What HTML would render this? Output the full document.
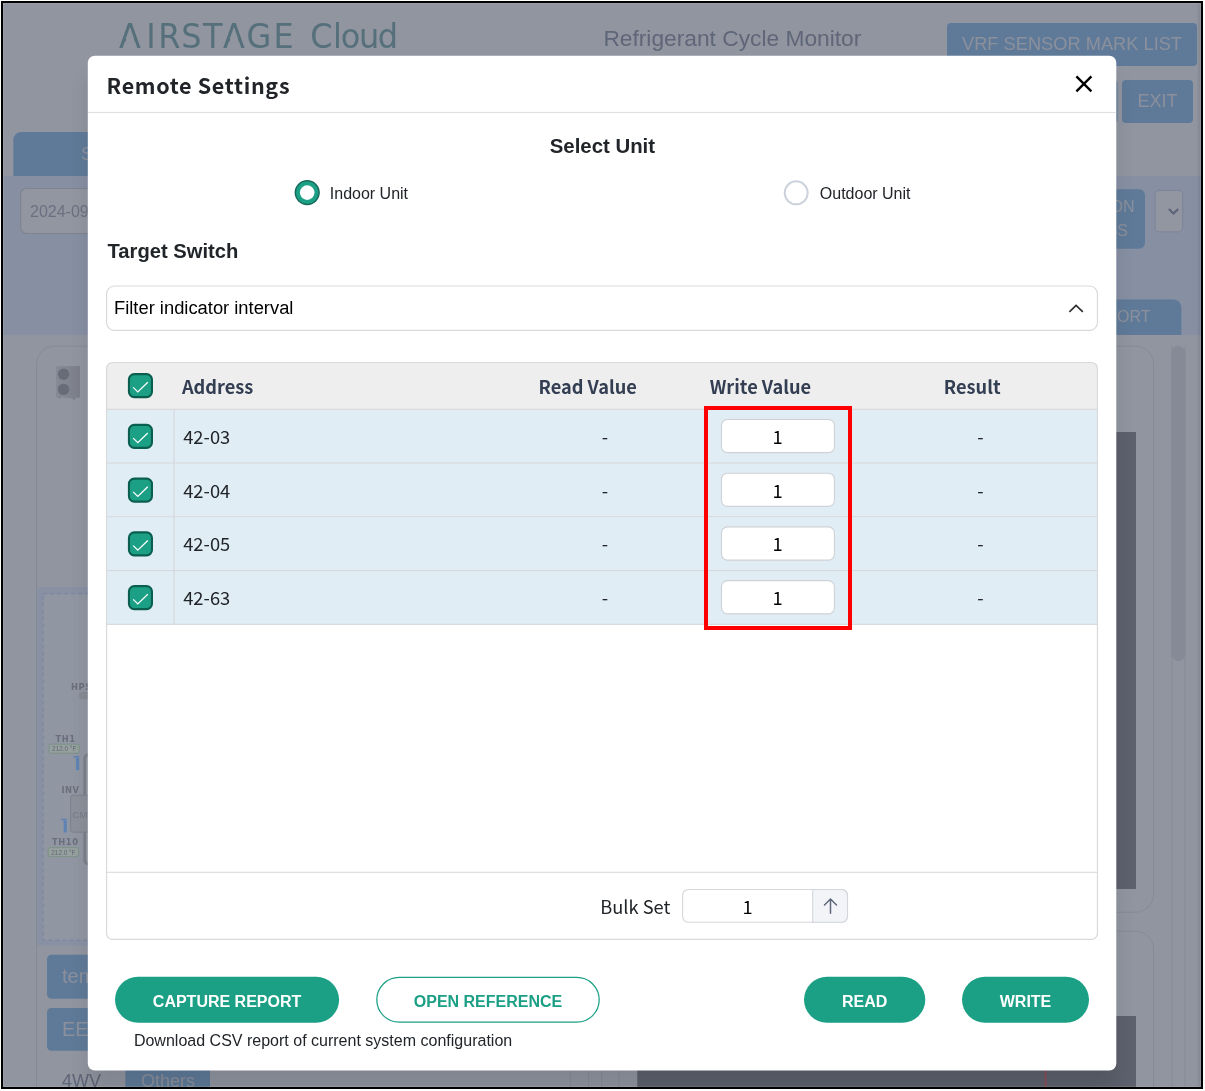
<!DOCTYPE html>
<html lang="en">
<head>
<meta charset="utf-8">
<title>Remote Settings</title>
<style>
*{box-sizing:border-box;margin:0;padding:0}
html,body{width:1205px;height:1091px;background:#fff;overflow:hidden}
body{font-family:"Liberation Sans",sans-serif;position:relative}
.abs,.stage *{position:absolute}
#frame{position:absolute;left:1px;top:1px;width:1202px;height:1088px;background:#000}
#clip{position:absolute;left:3px;top:3px;width:1198px;height:1084px;overflow:hidden;background:#9195a0}
.stage{position:absolute;left:-3px;top:-3px;width:1205px;height:1091px;will-change:transform}
.t{white-space:nowrap;line-height:1;display:block}
#clip:after{content:"";position:absolute;left:0;top:0;right:0;bottom:0;box-shadow:inset 0 0 0 1px rgba(255,255,255,.1);pointer-events:none}
svg{display:block;overflow:visible}
</style>
</head>
<body>
<div id="frame"></div>
<div id="clip">
<div class="stage" id="bg">
<svg class="abs" style="left:0;top:0" width="1205" height="1091" viewBox="0 0 1205 1091" font-family="'Liberation Sans',sans-serif">
<rect x="0" y="0" width="1205" height="1091" fill="#9195a0"/>
<!-- header -->
<g transform="translate(0 48.4) scale(1 1.055)">
<g font-family="'DejaVu Sans','Liberation Sans',sans-serif" font-size="32" fill="#56707b">
<text x="119.1 146.2 158.2 181.3 202.9 223.1 246.6 273.6" y="0">AIRSTAGE</text>
<text x="310.2 332.9 340.7 358.9 377.8" y="0">Cloud</text>
</g>
<path d="M126.7-9.700h6.800l1.500 3.900h-9.800zM230.700-9.700h6.800l1.500 3.900h-9.800z" fill="#9195a0"/>
</g>
<text x="603.4" y="46.4" font-size="22.75" fill="#5e6678">Refrigerant Cycle Monitor</text>
<rect x="947" y="23" width="250" height="43" rx="4" fill="#5f7a98"/>
<text x="1072" y="49.7" font-size="18.25" fill="#8b909c" text-anchor="middle">VRF SENSOR MARK LIST</text>
<rect x="1122" y="80" width="71" height="43" rx="4" fill="#5f7a98"/>
<text x="1157.5" y="106.9" font-size="18" fill="#8b909c" text-anchor="middle">EXIT</text>
<rect x="1000" y="80" width="117.5" height="43" rx="4" fill="#5f7a98"/>
<!-- tab + band -->
<path d="M13.300 176V140a8 8 0 0 1 8-8H200V176Z" fill="#5f7a98"/>
<text x="81" y="159.8" font-size="18" fill="#8b909c">SYSTEM</text>
<rect x="3" y="176" width="1199" height="159" fill="#878fa3"/>
<rect x="20.600" y="188.500" width="200" height="45" rx="6" fill="#9296a1" stroke="#7f8490" stroke-width="1.2"/>
<text x="30" y="217.2" font-size="16" fill="#6b7080">2024-09-10</text>
<rect x="1000" y="189.3" width="145" height="59.5" rx="6" fill="#5f7a98"/>
<text x="1134.6" y="212.2" font-size="16" fill="#8b909c" text-anchor="end">OPERATION</text>
<text x="1128" y="235.6" font-size="16" fill="#8b909c" text-anchor="end">ADDRESS</text>
<rect x="1155" y="190.300" width="27.700" height="41.600" rx="4.500" fill="#9296a1" stroke="#7f869b" stroke-width="1.2"/>
<path d="M1168.800 208.900l4.700 4.700 4.700-4.700" fill="none" stroke="#5d6578" stroke-width="2.1"/>
<path d="M1000 335V299.4H1173.4a8 8 0 0 1 8 8V335Z" fill="#5f7a98"/>
<text x="1150.6" y="322.3" font-size="16" fill="#8b909c" text-anchor="end">REPORT</text>
<!-- cards -->
<rect x="36.6" y="346.2" width="533.7" height="900" rx="18" fill="#9195a0" stroke="#868a96"/>
<rect x="619" y="346.2" width="534.6" height="566" rx="18" fill="#9195a0" stroke="#868a96"/>
<rect x="619" y="931.2" width="534.6" height="300" rx="18" fill="#9195a0" stroke="#868a96"/>
<rect x="588.2" y="346" width="1" height="760" fill="#888c97"/><rect x="601.2" y="346" width="1" height="760" fill="#888c97"/>
<!-- dark panels -->
<rect x="637.3" y="432" width="498.7" height="457" fill="#5d616d"/>
<rect x="637.3" y="1016" width="498.7" height="100" fill="#5d616d"/>
<rect x="1044.300" y="1016" width="2.500" height="100" fill="#80505f"/>
<!-- scrollbar -->
<rect x="1171.4" y="346" width="1" height="760" fill="#888c97"/>
<rect x="1184.4" y="346" width="1" height="760" fill="#888c97"/>
<rect x="1171.4" y="346" width="14" height="315" rx="7" fill="#858a96"/>
<linearGradient id="rs" x1="0" x2="1" y1="0" y2="0"><stop offset="0" stop-color="#000" stop-opacity=".03"/><stop offset="1" stop-color="#000" stop-opacity=".1"/></linearGradient><rect x="1197.200" y="0" width="4" height="1091" fill="url(#rs)"/>
<!-- outdoor unit picture -->
<g>
<linearGradient id="ug" x1="0" x2="1" y1="0" y2="0"><stop offset="0" stop-color="#878a94"/><stop offset=".5" stop-color="#82858f"/><stop offset="1" stop-color="#7b7e89"/></linearGradient>
<path d="M56 366.200L79.900 366V397.200L73 398.600 56 396.900Z" fill="url(#ug)"/>
<circle cx="63.600" cy="374.300" r="5.700" fill="#686c79"/>
<circle cx="63.600" cy="389.400" r="5.700" fill="#686c79"/>
<rect x="58.600" y="396.900" width="1.600" height="1.300" fill="#71747e"/><rect x="73" y="398.300" width="1.800" height="1.200" fill="#71747e"/>
</g>
<!-- diagram -->
<rect x="37.1" y="587.3" width="532.7" height="358" fill="#8890a4"/>
<rect x="43" y="593.8" width="521" height="346.4" fill="#9096a2" stroke="#7a82a0" stroke-dasharray="4 3"/>
<g font-family="'DejaVu Sans','Liberation Sans',sans-serif" font-weight="700" font-size="8.3" fill="#6b6f7b" letter-spacing=".6">
<text x="71" y="689.7">HPS</text>
<text x="55.4" y="742.1">TH1</text>
<text x="61.4" y="793.4">INV</text>
<text x="52" y="845.4">TH10</text>
</g>
<rect x="79.3" y="692.6" width="20" height="6" rx="3" fill="#888c96" stroke="#80848e" stroke-width=".6"/>
<rect x="49.2" y="744.2" width="30" height="9" rx="2" fill="#96a09e" stroke="#76907f" stroke-width=".8"/>
<text x="64.2" y="751.3" font-size="6.4" fill="#5f6873" text-anchor="middle">212.0 °F</text>
<rect x="48.2" y="847.6" width="30.4" height="9" rx="2" fill="#96a09e" stroke="#76907f" stroke-width=".8"/>
<text x="63.4" y="854.7" font-size="6.4" fill="#5f6873" text-anchor="middle">212.0 °F</text>
<g fill="#5f83b4">
<rect x="76" y="758" width="3.2" height="12.2" rx=".6"/><rect x="73.6" y="756" width="5.6" height="1.6"/>
<rect x="63.6" y="820.6" width="3.2" height="12" rx=".6"/><rect x="61.2" y="818.7" width="5.6" height="1.6"/>
</g>
<path d="M100 754.6H88.700a4 4 0 0 0-4 4V795" fill="none" stroke="#7c808b" stroke-width="2.6"/>
<path d="M84.7 832V860a4 4 0 0 0 4 4H100" fill="none" stroke="#7c808b" stroke-width="2.6"/>
<rect x="70.6" y="795.2" width="40" height="37" rx="2.5" fill="#8c909a" stroke="#7d818c"/>
<text x="72.6" y="818" font-size="9.6" fill="#767a86">CM</text>
<!-- bottom-left buttons -->
<rect x="47" y="954.7" width="120" height="44" rx="4.5" fill="#5f7a98"/>
<text x="62" y="982.8" font-size="20" fill="#8b909c">temp</text>
<rect x="47" y="1008" width="120" height="42.8" rx="4.5" fill="#5f7a98"/>
<text x="62" y="1035.6" font-size="20" fill="#8b909c">EEV</text>
<text x="61.9" y="1087" font-size="18" fill="#5e6678">4WV</text>
<rect x="125.4" y="1065" width="84.6" height="40" fill="#5f7a98"/>
<text x="140.9" y="1087" font-size="18" fill="#8b909c">Others</text>
<!-- bottom strip lines -->

</svg>
</div>
<div class="stage" id="fg">
<div id="modal" style="left:88px;top:56px;width:1028px;height:1014px;border-radius:7px;box-shadow:0 20px 20px rgba(0,0,0,.105)">
<svg style="left:0;top:0" width="1029" height="1015" viewBox="0 0 1029 1015">
<rect x="-0.2" y="-0.2" width="1028.5" height="1014.7" rx="7" fill="#fff"/>
<path d="M988.4 20.4l15 15m0-15l-15 15" stroke="#000" stroke-width="2.4" fill="none"/>
<rect x="0" y="55.9" width="1028.3" height="1.1" fill="#dee0e3"/>
<circle cx="219.2" cy="136.6" r="12.6" fill="#176a59"/><circle cx="219.2" cy="136.6" r="11.1" fill="#1ba085"/><circle cx="219.2" cy="136.6" r="7.3" fill="#fff"/>
<circle cx="708.2" cy="136.8" r="11.5" fill="#fff" stroke="#cdd3dc" stroke-width="2"/>
<rect x="18.55" y="229.95" width="990.9" height="44.45" rx="8" fill="#fff" stroke="#d9d9d9" stroke-width="1.15"/>
<path d="M981.4 255.8l6.700-6.400 6.700 6.400" stroke="#2e2e2e" stroke-width="1.65" fill="none"/>
<path d="M18.55 353.85V312.5a6 6 0 0 1 6-6H1003.45a6 6 0 0 1 6 6V353.85Z" fill="#eeeeee"/>
<rect x="18.55" y="353.85" width="990.9" height="53.75" fill="#e0edf5"/>
<rect x="18.55" y="407.6" width="990.9" height="53.75" fill="#e0edf5"/>
<rect x="18.55" y="461.35" width="990.9" height="53.75" fill="#e0edf5"/>
<rect x="18.55" y="515.1" width="990.9" height="53.75" fill="#e0edf5"/>
<rect x="85.45" y="353.85" width="1.1" height="215" fill="#d4d8db"/>
<rect x="18.55" y="352.75" width="990.9" height="1.1" fill="#d8d8d8"/>
<rect x="18.55" y="406.5" width="990.9" height="1.1" fill="#d5d9dc"/>
<rect x="18.55" y="460.25" width="990.9" height="1.1" fill="#d5d9dc"/>
<rect x="18.55" y="514" width="990.9" height="1.1" fill="#d5d9dc"/>
<rect x="18.55" y="567.75" width="990.9" height="1.1" fill="#d5d9dc"/>
<rect x="18.55" y="815.75" width="990.9" height="1.1" fill="#dbdbdb"/>
<rect x="18.55" y="306.5" width="990.9" height="576.8" rx="6" fill="none" stroke="#d9d9d9" stroke-width="1.15"/>
<rect x="40.95" y="318.15" width="23" height="23" rx="5.3" fill="#1ba085" stroke="#0a5e4f" stroke-width="2.1"/><path d="M45.2 331.4l4.600 4.500 10.000-9.600" fill="none" stroke="#fff" stroke-width="1.3"/>
<rect x="40.95" y="368.88" width="23" height="23" rx="5.3" fill="#1ba085" stroke="#0a5e4f" stroke-width="2.1"/><path d="M45.2 382.13l4.600 4.500 10.000-9.600" fill="none" stroke="#fff" stroke-width="1.3"/>
<rect x="633.5" y="363.43" width="112.9" height="33.2" rx="6" fill="#fff" stroke="#cfd2d6" stroke-width="1.1"/>
<rect x="40.95" y="422.63" width="23" height="23" rx="5.3" fill="#1ba085" stroke="#0a5e4f" stroke-width="2.1"/><path d="M45.2 435.88l4.600 4.500 10.000-9.600" fill="none" stroke="#fff" stroke-width="1.3"/>
<rect x="633.5" y="417.18" width="112.9" height="33.2" rx="6" fill="#fff" stroke="#cfd2d6" stroke-width="1.1"/>
<rect x="40.95" y="476.37" width="23" height="23" rx="5.3" fill="#1ba085" stroke="#0a5e4f" stroke-width="2.1"/><path d="M45.2 489.62l4.600 4.500 10.000-9.600" fill="none" stroke="#fff" stroke-width="1.3"/>
<rect x="633.5" y="470.92" width="112.9" height="33.2" rx="6" fill="#fff" stroke="#cfd2d6" stroke-width="1.1"/>
<rect x="40.95" y="530.12" width="23" height="23" rx="5.3" fill="#1ba085" stroke="#0a5e4f" stroke-width="2.1"/><path d="M45.2 543.37l4.600 4.500 10.000-9.600" fill="none" stroke="#fff" stroke-width="1.3"/>
<rect x="633.5" y="524.67" width="112.9" height="33.2" rx="6" fill="#fff" stroke="#cfd2d6" stroke-width="1.1"/>
<rect x="618" y="352" width="144" height="220" fill="none" stroke="#ff0000" stroke-width="4"/>
<rect x="594.6" y="833.5" width="164.9" height="32.8" rx="6" fill="#fff" stroke="#d6d8db" stroke-width="1.1"/>
<path d="M724.7 833.5H753.5a6 6 0 0 1 6 6V860.3a6 6 0 0 1-6 6H724.7Z" fill="#f3f4f7" stroke="#d2d6dd" stroke-width="1.1"/>
<path d="M742.5 857.2V843.3M736.5 849l6-6 6 6" stroke="#5f687b" stroke-width="1.5" fill="none" stroke-linecap="round" stroke-linejoin="round"/>
<rect x="27" y="920.8" width="224.1" height="46" rx="23" fill="#1ba085"/>
<rect x="288.8" y="921.4" width="222.4" height="44.8" rx="22.4" fill="#fff" stroke="#1ba085" stroke-width="1.25"/>
<rect x="716" y="920.8" width="121.3" height="46" rx="23" fill="#1ba085"/>
<rect x="874" y="920.8" width="127" height="46" rx="23" fill="#1ba085"/>
</svg>
<span class="t " style="left:18.60px;top:18.18px;font-family:'Noto Sans CJK JP','Noto Sans CJK SC',sans-serif;font-size:21.5px;font-weight:700;color:#212529;letter-spacing:0.67px;">Remote Settings</span>
<span class="t " style="left:514.40px;top:80.23px;font-family:'Liberation Sans',sans-serif;font-size:20.4px;font-weight:700;color:#212529;transform:translateX(-50%);">Select Unit</span>
<span class="t " style="left:241.80px;top:129.86px;font-family:'Liberation Sans',sans-serif;font-size:16px;font-weight:400;color:#212529;">Indoor Unit</span>
<span class="t " style="left:731.80px;top:129.86px;font-family:'Liberation Sans',sans-serif;font-size:16px;font-weight:400;color:#212529;">Outdoor Unit</span>
<span class="t " style="left:19.50px;top:185.10px;font-family:'Liberation Sans',sans-serif;font-size:20.2px;font-weight:700;color:#212529;">Target Switch</span>
<span class="t " style="left:26.00px;top:242.87px;font-family:'Liberation Sans',sans-serif;font-size:18.35px;font-weight:400;color:#000;">Filter indicator interval</span>
<span class="t " style="left:93.90px;top:320.86px;font-family:'Noto Sans CJK JP','Noto Sans CJK SC',sans-serif;font-size:18.2px;font-weight:700;color:#333e53;">Address</span>
<span class="t " style="left:499.70px;top:320.86px;font-family:'Noto Sans CJK JP','Noto Sans CJK SC',sans-serif;font-size:18.2px;font-weight:700;color:#333e53;transform:translateX(-50%);">Read Value</span>
<span class="t " style="left:672.40px;top:320.86px;font-family:'Noto Sans CJK JP','Noto Sans CJK SC',sans-serif;font-size:18.2px;font-weight:700;color:#333e53;transform:translateX(-50%);">Write Value</span>
<span class="t " style="left:884.20px;top:320.86px;font-family:'Noto Sans CJK JP','Noto Sans CJK SC',sans-serif;font-size:18.2px;font-weight:700;color:#333e53;transform:translateX(-50%);">Result</span>
<span class="t " style="left:95.20px;top:370.75px;font-family:'Noto Sans CJK JP','Noto Sans CJK SC',sans-serif;font-size:18.35px;font-weight:400;color:#212529;">42-03</span>
<span class="t " style="left:516.90px;top:370.75px;font-family:'Noto Sans CJK JP','Noto Sans CJK SC',sans-serif;font-size:18.35px;font-weight:400;color:#212529;transform:translateX(-50%);">-</span>
<span class="t " style="left:689.70px;top:370.75px;font-family:'Noto Sans CJK JP','Noto Sans CJK SC',sans-serif;font-size:18.35px;font-weight:400;color:#000;transform:translateX(-50%);">1</span>
<span class="t " style="left:892.50px;top:370.75px;font-family:'Noto Sans CJK JP','Noto Sans CJK SC',sans-serif;font-size:18.35px;font-weight:400;color:#212529;transform:translateX(-50%);">-</span>
<span class="t " style="left:95.20px;top:424.50px;font-family:'Noto Sans CJK JP','Noto Sans CJK SC',sans-serif;font-size:18.35px;font-weight:400;color:#212529;">42-04</span>
<span class="t " style="left:516.90px;top:424.50px;font-family:'Noto Sans CJK JP','Noto Sans CJK SC',sans-serif;font-size:18.35px;font-weight:400;color:#212529;transform:translateX(-50%);">-</span>
<span class="t " style="left:689.70px;top:424.50px;font-family:'Noto Sans CJK JP','Noto Sans CJK SC',sans-serif;font-size:18.35px;font-weight:400;color:#000;transform:translateX(-50%);">1</span>
<span class="t " style="left:892.50px;top:424.50px;font-family:'Noto Sans CJK JP','Noto Sans CJK SC',sans-serif;font-size:18.35px;font-weight:400;color:#212529;transform:translateX(-50%);">-</span>
<span class="t " style="left:95.20px;top:478.25px;font-family:'Noto Sans CJK JP','Noto Sans CJK SC',sans-serif;font-size:18.35px;font-weight:400;color:#212529;">42-05</span>
<span class="t " style="left:516.90px;top:478.25px;font-family:'Noto Sans CJK JP','Noto Sans CJK SC',sans-serif;font-size:18.35px;font-weight:400;color:#212529;transform:translateX(-50%);">-</span>
<span class="t " style="left:689.70px;top:478.25px;font-family:'Noto Sans CJK JP','Noto Sans CJK SC',sans-serif;font-size:18.35px;font-weight:400;color:#000;transform:translateX(-50%);">1</span>
<span class="t " style="left:892.50px;top:478.25px;font-family:'Noto Sans CJK JP','Noto Sans CJK SC',sans-serif;font-size:18.35px;font-weight:400;color:#212529;transform:translateX(-50%);">-</span>
<span class="t " style="left:95.20px;top:532.00px;font-family:'Noto Sans CJK JP','Noto Sans CJK SC',sans-serif;font-size:18.35px;font-weight:400;color:#212529;">42-63</span>
<span class="t " style="left:516.90px;top:532.00px;font-family:'Noto Sans CJK JP','Noto Sans CJK SC',sans-serif;font-size:18.35px;font-weight:400;color:#212529;transform:translateX(-50%);">-</span>
<span class="t " style="left:689.70px;top:532.00px;font-family:'Noto Sans CJK JP','Noto Sans CJK SC',sans-serif;font-size:18.35px;font-weight:400;color:#000;transform:translateX(-50%);">1</span>
<span class="t " style="left:892.50px;top:532.00px;font-family:'Noto Sans CJK JP','Noto Sans CJK SC',sans-serif;font-size:18.35px;font-weight:400;color:#212529;transform:translateX(-50%);">-</span>
<span class="t " style="left:512.20px;top:840.67px;font-family:'Noto Sans CJK JP','Noto Sans CJK SC',sans-serif;font-size:18.3px;font-weight:400;color:#212529;">Bulk Set</span>
<span class="t " style="left:659.70px;top:840.67px;font-family:'Noto Sans CJK JP','Noto Sans CJK SC',sans-serif;font-size:18.3px;font-weight:400;color:#000;transform:translateX(-50%);">1</span>
<span class="t " style="left:139.05px;top:937.96px;font-family:'Liberation Sans',sans-serif;font-size:16px;font-weight:700;color:#fff;transform:translateX(-50%);">CAPTURE REPORT</span>
<span class="t " style="left:400.00px;top:937.96px;font-family:'Liberation Sans',sans-serif;font-size:16px;font-weight:700;color:#1ba085;transform:translateX(-50%);">OPEN REFERENCE</span>
<span class="t " style="left:776.65px;top:937.96px;font-family:'Liberation Sans',sans-serif;font-size:16px;font-weight:700;color:#fff;transform:translateX(-50%);">READ</span>
<span class="t " style="left:937.50px;top:937.96px;font-family:'Liberation Sans',sans-serif;font-size:16px;font-weight:700;color:#fff;transform:translateX(-50%);">WRITE</span>
<span class="t " style="left:45.90px;top:975.74px;font-family:'Liberation Sans',sans-serif;font-size:16.02px;font-weight:400;color:#212529;">Download CSV report of current system configuration</span>
</div>
</div>
</div>
</body>
</html>
